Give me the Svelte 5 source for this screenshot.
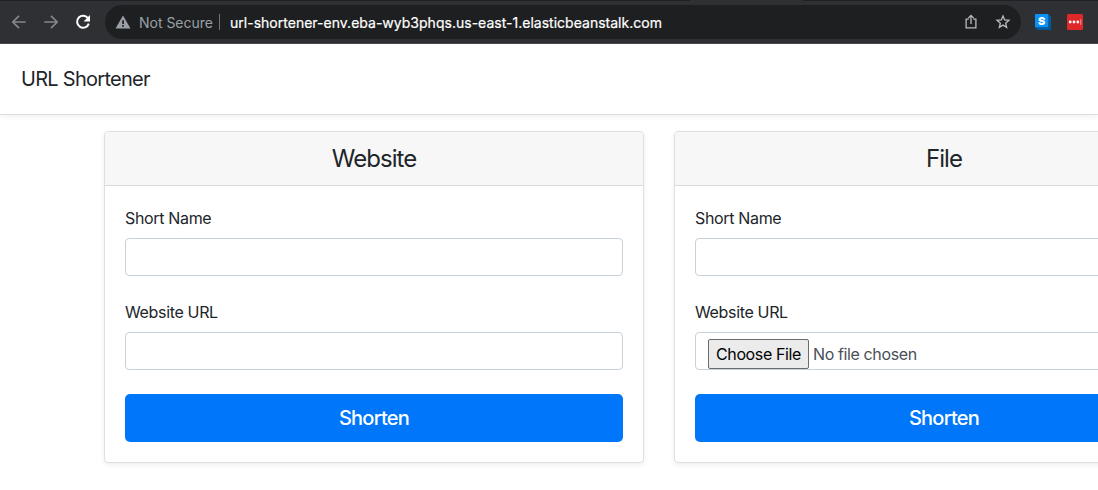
<script>
  const address = 'url-shortener-env.eba-wyb3phqs.us-east-1.elasticbeanstalk.com';
  const cards = [
    { title: 'Website', file: false },
    { title: 'File', file: true }
  ];
</script>

<div class="page">
  <div class="toolbar">
    <div class="nav-icons">
      <svg class="dim" width="16" height="16" viewBox="0 0 16 16"><path d="M14.7 8H2.2M8 1.8 1.8 8 8 14.2" /></svg>
      <svg class="dim" width="16" height="16" viewBox="0 0 16 16"><path d="M1.3 8h12.5M8 1.8 14.2 8 8 14.2" /></svg>
      <svg class="reload" width="16" height="16" viewBox="0 0 16 16">
        <path d="M13.2 4.6A6 6 0 1 0 13.8 9.6" />
        <path class="head" d="M15 1v6.4H8.6z" />
      </svg>
    </div>
    <div class="omnibox">
      <svg class="warning" width="16" height="14" viewBox="0 0 16 14">
        <path fill="#9aa0a6" d="M8 .6 15.5 13.4H.5z" />
        <path fill="#1e1f21" d="M7.2 5.2h1.7v3.7H7.2zM7.2 10h1.7v1.7H7.2z" />
      </svg>
      <span class="security">Not Secure</span>
      <span class="divider"></span>
      <span class="address">{address}</span>
      <svg class="share" width="14" height="16" viewBox="0 0 14 16"><path d="M4.7 5.2H2.1v8.6h9.8V5.2H9.3M7 10V1.7M4.3 4.1 7 1.4l2.7 2.7" /></svg>
      <svg class="star" width="16" height="16" viewBox="0 0 16 16"><path d="m8 2 1.65 4 4.3.35-3.3 2.8 1.03 4.2L8 11.1l-3.68 2.25 1.03-4.2-3.3-2.8L6.35 6z" /></svg>
    </div>
    <svg class="ext-s" width="16" height="16" viewBox="0 0 16 16">
      <path fill="#005a9c" d="M0 13h13V0l3 2.5V16H2.5z" />
      <path fill="#0a91f5" d="M0 0h13.2v13.2H0z" />
      <text x="6.6" y="10.6" text-anchor="middle" fill="#fff">S</text>
    </svg>
    <svg class="ext-dots" width="16" height="16" viewBox="0 0 16 16">
      <rect width="16" height="16" rx="1.6" fill="#df2828" />
      <g fill="#fff"><circle cx="3.2" cy="8" r="1.4" /><circle cx="7" cy="8" r="1.4" /><circle cx="10.8" cy="8" r="1.4" /><path fill="#f5a0a0" d="M13.3 5.2h.9v5.6h-.9z" /></g>
    </svg>
  </div>

  <header>URL Shortener</header>

  <main>
    {#each cards as card}
      <section>
        <h4>{card.title}</h4>
        <div class="body">
          <div class="label">Short Name</div>
          <div class="field"></div>
          <div class="label">Website URL</div>
          <div class="field">
            {#if card.file}
              <span class="choose">Choose File</span><span class="chosen">No file chosen</span>
            {/if}
          </div>
          <button>Shorten</button>
        </div>
      </section>
    {/each}
  </main>
</div>

<style>
  :global(body) { margin: 0; background: #fff; overflow: hidden; }
  .page { width: 1098px; height: 490px; overflow: hidden; font-family: Inter, "Liberation Sans", sans-serif; color: #212529; }
  .toolbar { box-sizing: border-box; height: 44px; padding-top: 1px; display: flex; align-items: center; background: linear-gradient(90deg, #202124 690px, #2f3034 690px 803px, #202124 803px) top / 100% 1px no-repeat #2f3034; border-bottom: 1px solid #49484d; }
  svg { display: block; flex: none; fill: none; }
  .nav-icons { display: flex; gap: 16px; padding-left: 11px; width: 94px; }
  .dim path { stroke: #858689; stroke-width: 1.7; }
  .reload path { stroke: #fff; stroke-width: 2; }
  .reload .head { fill: #fff; stroke: none; }
  .omnibox { box-sizing: border-box; width: 916px; height: 34px; border-radius: 17px; background: #1e1f21; display: flex; align-items: center; padding: 0 10px; }
  .security { margin-left: 8px; width: 74px; font-size: 14px; letter-spacing: -.02px; color: #9aa0a6; white-space: nowrap; }
  .divider { width: 1px; height: 16px; background: #727579; margin: 0 10px 0 6px; }
  .address { flex: 1; font-size: 14px; letter-spacing: .015px; color: #fff; white-space: nowrap; -webkit-text-stroke: .2px #fff; }
  .share path, .star path { stroke: #b8bbbf; stroke-width: 1.3; }
  .share { margin-right: 17px; }
  .ext-s { margin-left: 14px; }
  .ext-s text { font: 900 11px Inter, sans-serif; }
  .ext-dots { margin-left: 16px; }
  header { box-sizing: border-box; height: 71px; padding: 20px 21px; border-bottom: 1px solid #d8dfe5; box-shadow: 0 2px 6px rgba(0, 0, 0, .06); font-size: 20px; line-height: 30px; letter-spacing: -.72px; }
  main { display: grid; grid-template-columns: 540px 540px; gap: 30px; padding: 16px 0 0 104px; }
  section { box-sizing: border-box; height: 332px; border: 1px solid #dfdfdf; border-radius: 4px; box-shadow: 0 2px 5px rgba(0, 0, 0, .07); background: #fff; }
  h4 { box-sizing: border-box; height: 54px; margin: 0; border-bottom: 1px solid #dadada; border-radius: 3px 3px 0 0; background: #f7f7f7; text-align: center; font-size: 24px; font-weight: 400; line-height: 54px; letter-spacing: -.95px; }
  .body { padding: 20px; }
  .label { font-size: 16px; line-height: 24px; margin-bottom: 8px; letter-spacing: -.34px; }
  .field { box-sizing: border-box; height: 38px; margin-bottom: 24px; border: 1px solid #c9d1d8; border-radius: 4px; padding: 6px 12px; display: flex; font-size: 16px; letter-spacing: -.38px; }
  .choose { box-sizing: border-box; width: 101px; height: 30px; border: 1px solid #6b6b6b; border-radius: 2px; background: #ebebeb; color: #000; text-align: center; line-height: 29px; }
  .chosen { margin-left: 4px; line-height: 31px; color: #495057; }
  button { display: block; width: 100%; height: 48px; border: 0; border-radius: 5px; padding: 0; background: #0077fb; color: #fff; font: 500 20px/48px Inter, sans-serif; letter-spacing: -.75px; }
</style>
